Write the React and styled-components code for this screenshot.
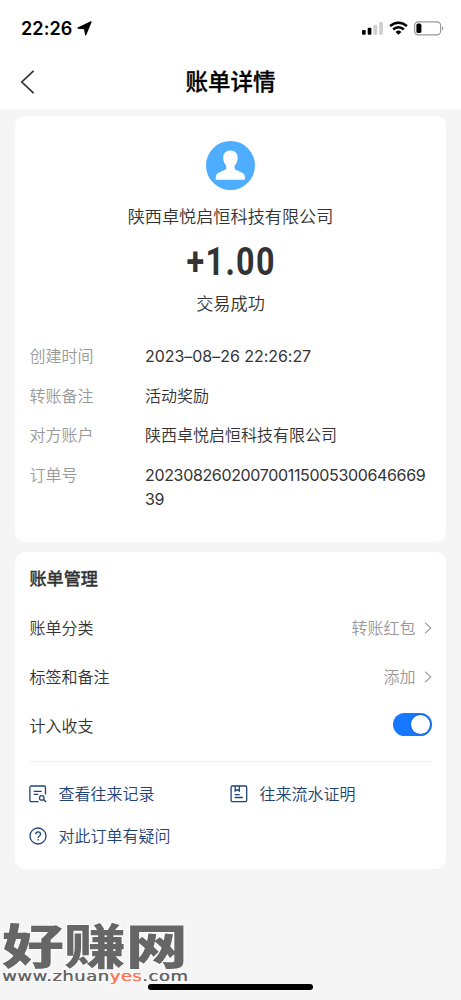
import React, { useState } from 'react'
import { styled, createGlobalStyle } from 'styled-components'

const GlobalStyle = createGlobalStyle`
* {
  box-sizing: border-box;
}
body {
  margin: 0;
  background: #f5f5f5;
  font-family: Inter, "Noto Sans CJK SC", sans-serif;
  color: #333;
}
`
const Page = styled.div`
position: relative;
width: 461px;
height: 1000px;
overflow: hidden;
background: #f5f5f5;
`
const Header = styled.header`
height: 109px;
background: #fff;
`
const StatusBar = styled.div`
height: 57px;
padding: 0 17px 0 21px;
display: flex;
align-items: center;
justify-content: space-between;
`
const Clock = styled.div`
display: flex;
align-items: center;
gap: 5px;
font-size: 18px;
font-weight: 600;
letter-spacing: 0.1px;
color: #000;
`
const StatusIcons = styled.div`
display: flex;
align-items: center;
gap: 6px;
margin-top: -1px;
`
const NavBar = styled.div`
height: 49px;
padding: 0 20px;
display: grid;
grid-template-columns: 16px 1fr 16px;
align-items: center;
`
const BackButton = styled.button`
display: flex;
padding: 0;
border: none;
background: none;
cursor: pointer;
`
const Title = styled.h1`
margin: 0;
text-align: center;
font-size: 22.5px;
line-height: 30px;
font-weight: 500;
-webkit-text-stroke: 0.3px #000;
color: #000;
`
const Card = styled.section`
margin: 0 15px 10px;
height: ${props => props.height}px;
padding: 0 14.5px;
border-radius: 10px;
background: #fff;
`
const Content = styled.main`
padding-top: 7px;
`
const Summary = styled.div`
padding-top: 24.5px;
height: 228px;
display: flex;
flex-direction: column;
align-items: center;
`
const Company = styled.div`
margin-top: 15.5px;
font-size: 17.15px;
line-height: 24px;
font-weight: 350;
`
const Amount = styled.div`
margin-top: 10px;
font-family: Roboto, sans-serif;
font-size: 38.5px;
font-weight: 700;
line-height: 46px;
letter-spacing: 1.6px;
margin-right: -1.6px;
transform: scaleX(0.84);
`
const Result = styled.div`
margin-top: 7px;
font-size: 17.15px;
line-height: 24px;
font-weight: 350;
`
const DetailRow = styled.div`
display: grid;
grid-template-columns: 115.5px 282px;
margin-bottom: 15px;
font-size: 16px;
line-height: 24.5px;
font-weight: 350;
`
const Label = styled.span`
color: #999;
`
const Value = styled.span`
word-break: break-all;
font-weight: ${props => props.spacing === undefined ? 350 : 400};
letter-spacing: ${props => props.spacing || 0}px;
`
const SectionTitle = styled.h2`
margin: 0;
padding-top: 15px;
font-size: 17.1px;
line-height: 24px;
font-weight: 500;
-webkit-text-stroke: 0.3px #333;
`
const SettingList = styled.div`
padding-top: 12px;
height: 171px;
border-bottom: 1px solid #eee;
`
const Setting = styled.div`
height: 48.7px;
display: flex;
align-items: center;
justify-content: space-between;
font-size: 16px;
font-weight: 350;
`
const Extra = styled.span`
display: flex;
align-items: center;
gap: 8px;
color: #999;
svg {
  margin-top: 1px;
}
`
const Switch = styled.button`
width: 39px;
height: 23px;
padding: 2px;
border: none;
border-radius: 12px;
display: flex;
justify-content: ${props => props.on ? 'flex-end' : 'flex-start'};
background: ${props => props.on ? '#1677ff' : '#ccc'};
cursor: pointer;
`
const Knob = styled.span`
width: 19px;
height: 19px;
border-radius: 50%;
background: #fff;
box-shadow: 0 0 2px rgba(0, 0, 0, 0.45);
`
const Links = styled.div`
padding-top: 10px;
display: grid;
grid-template-columns: 201px 201px;
grid-auto-rows: 42px;
`
const LinkItem = styled.div`
display: flex;
align-items: center;
gap: 11.5px;
margin-left: -0.6px;
font-size: 16px;
font-weight: 350;
color: #1f4474;
svg {
  margin-top: 1px;
}
`
const Watermark = styled.div`
position: absolute;
left: 2px;
top: 919px;
color: #666;
`
const WatermarkName = styled.div`
font-family: "Noto Sans CJK SC", sans-serif;
font-size: 48px;
font-weight: 900;
line-height: 48px;
height: 48px;
white-space: nowrap;
transform: scaleX(1.29);
transform-origin: left;
-webkit-text-stroke: 1.5px #fff;
paint-order: stroke fill;
`
const WatermarkSite = styled.div`
font-family: "DejaVu Sans", sans-serif;
font-size: 13.5px;
line-height: 18px;
white-space: nowrap;
letter-spacing: 0.4px;
transform: scaleX(1.33);
transform-origin: left;
-webkit-text-stroke: 1.5px #fff;
paint-order: stroke fill;
text-shadow: 0.3px 0 0 currentColor;
`
const Highlight = styled.span`
color: #ff7350;
`
const HomeIndicator = styled.div`
position: absolute;
left: 148px;
top: 984px;
width: 165px;
height: 6px;
border-radius: 3px;
background: #000;
`

const LocationIcon = () => (
  <svg width="15" height="15" viewBox="0 0 15 15">
    <path d="M14 .8 8.7 13.8 7.6 7.6 1 7z" fill="#000" stroke="#000" strokeWidth="1.3" strokeLinejoin="round" />
  </svg>
)

const SignalIcon = () => (
  <svg width="21" height="14" viewBox="0 0 21 14">
    <rect x="0" y="9" width="3.7" height="4.7" rx="1" fill="#000" />
    <rect x="5.7" y="6.7" width="3.7" height="7" rx="1" fill="#000" />
    <rect x="11.5" y="3.8" width="3.7" height="9.9" rx="1" fill="#d0d0d0" />
    <rect x="17.2" y="1" width="3.7" height="12.7" rx="1" fill="#d0d0d0" />
  </svg>
)

const WifiIcon = () => (
  <svg width="19" height="14" viewBox="0 0 19 14">
    <g fill="none" stroke="#000" strokeWidth="2.5">
      <path d="M1.1 5.1a12 12 0 0 1 16.8 0" />
      <path d="M4.2 8.5a7.5 7.5 0 0 1 10.6 0" />
    </g>
    <path d="M6.6 10.9a4.2 4.2 0 0 1 5.8 0L9.5 13.8z" fill="#000" />
  </svg>
)

const BatteryIcon = () => (
  <svg width="30" height="15" viewBox="0 0 30 15">
    <rect x="0.6" y="0.8" width="26" height="13" rx="3.6" fill="none" stroke="#999" strokeWidth="1.2" />
    <rect x="2.4" y="2.6" width="5" height="9.4" rx="1.6" fill="#000" />
    <path d="M28 5.2c1.7.7 1.7 3.5 0 4.2z" fill="#999" />
  </svg>
)

const BackIcon = () => (
  <svg width="16" height="24" viewBox="0 0 16 24">
    <path d="M13.6 .8 1.8 12l11.8 11.2" fill="none" stroke="#333" strokeWidth="1.7" />
  </svg>
)

const Avatar = () => (
  <svg width="49" height="49" viewBox="0 0 49 49">
    <circle cx="24.5" cy="24.5" r="24.5" fill="#4fadff" />
    <path d="M24.5 9.5c-4.6 0-7.3 3-7.3 7.3 0 3.2 1.2 5.9 3 7.8v3.1c0 1.3-7.5 3.2-9.3 5.3-.9 1.1-1.2 3-1.2 5.8h29.3c0-2.800-.2-4.700-1.100-5.800-1.800-2.100-9.300-4-9.300-5.300v-3.100c1.900-1.900 3.100-4.600 3.100-7.800 0-4.300-2.600-7.300-7.200-7.300z" fill="#fff" />
  </svg>
)

const Chevron = () => (
  <svg width="8" height="12" viewBox="0 0 8 12">
    <path d="M1 .7 6.8 6 1 11.3" fill="none" stroke="#999" strokeWidth="1.1" />
  </svg>
)

const RecordIcon = () => (
  <svg width="18" height="18" viewBox="0 0 18 18" fill="none" stroke="#1f4474" strokeWidth="1.3">
    <path d="M9.5 16.6H2.2a1.3 1.3 0 0 1-1.3-1.3V2.3A1.3 1.3 0 0 1 2.2 1h13a1.3 1.3 0 0 1 1.3 1.3v7.2" />
    <path d="M4.7 6.3h8M4.7 9.3h4.6" />
    <circle cx="12.8" cy="12.9" r="2.3" />
    <path d="m14.5 14.6 2.6 2.4" />
  </svg>
)

const ProofIcon = () => (
  <svg width="18" height="18" viewBox="0 0 18 18" fill="none" stroke="#1f4474" strokeWidth="1.3">
    <rect x="1.1" y="1" width="15.6" height="15.7" rx="1.4" />
    <path d="M5.2 1v5l2.1-1.4 2.1 1.4V1M4.7 9.7h5M4.7 12.5h8.2" />
  </svg>
)

const QuestionIcon = () => (
  <svg width="18" height="18" viewBox="0 0 18 18" fill="none" stroke="#1f4474" strokeWidth="1.3">
    <circle cx="9" cy="9" r="8" />
    <path d="M6.7 7.2c0-3 4.8-3 4.8 0 0 1.9-2.4 1.8-2.4 3.7M9.1 12v1.5" />
  </svg>
)

const details = [
  { label: '创建时间', value: '2023–08–26 22:26:27', spacing: -0.04 },
  { label: '转账备注', value: '活动奖励' },
  { label: '对方账户', value: '陕西卓悦启恒科技有限公司' },
  { label: '订单号', value: '20230826020070011500530064666939', spacing: -0.34 },
]

const settings = [
  { label: '账单分类', extra: '转账红包' },
  { label: '标签和备注', extra: '添加' },
]

const links = [
  { label: '查看往来记录', Icon: RecordIcon },
  { label: '往来流水证明', Icon: ProofIcon },
  { label: '对此订单有疑问', Icon: QuestionIcon },
]

const App = () => {
  const [counted, setCounted] = useState(true)
  return (
    <Page>
      <GlobalStyle />
      <Header>
        <StatusBar>
          <Clock>22:26 <LocationIcon /></Clock>
          <StatusIcons>
            <SignalIcon />
            <WifiIcon />
            <BatteryIcon />
          </StatusIcons>
        </StatusBar>
        <NavBar>
          <BackButton aria-label="返回"><BackIcon /></BackButton>
          <Title>账单详情</Title>
        </NavBar>
      </Header>
      <Content>
        <Card height={426}>
          <Summary>
            <Avatar />
            <Company>陕西卓悦启恒科技有限公司</Company>
            <Amount>+1.00</Amount>
            <Result>交易成功</Result>
          </Summary>
          {details.map((item) => (
            <DetailRow key={item.label}>
              <Label>{item.label}</Label>
              <Value spacing={item.spacing}>{item.value}</Value>
            </DetailRow>
          ))}
        </Card>
        <Card height={317}>
          <SectionTitle>账单管理</SectionTitle>
          <SettingList>
            {settings.map((item) => (
              <Setting key={item.label}>
                {item.label}
                <Extra>{item.extra}<Chevron /></Extra>
              </Setting>
            ))}
            <Setting>
              计入收支
              <Switch on={counted} aria-label="计入收支" onClick={() => setCounted(!counted)}>
                <Knob />
              </Switch>
            </Setting>
          </SettingList>
          <Links>
            {links.map(({ label, Icon }) => (
              <LinkItem key={label}><Icon />{label}</LinkItem>
            ))}
          </Links>
        </Card>
      </Content>
      <Watermark>
        <WatermarkName>好赚网</WatermarkName>
        <WatermarkSite>www.zhuan<Highlight>yes</Highlight>.com</WatermarkSite>
      </Watermark>
      <HomeIndicator />
    </Page>
  )
}

export default App
